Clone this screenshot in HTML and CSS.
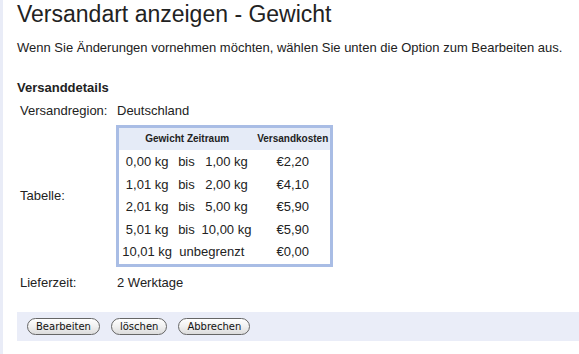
FILE: index.html
```html
<!DOCTYPE html>
<html lang="de">
<head>
    <meta charset="UTF-8">
    <title>Versandart anzeigen - Gewicht</title>
    <link rel="stylesheet" href="styles.css">
</head>
<body>
    <div class="page">
        <h1>Versandart anzeigen - Gewicht</h1>
        <p class="intro">Wenn Sie Änderungen vornehmen möchten, wählen Sie unten die Option zum Bearbeiten aus.</p>
        <h3>Versanddetails</h3>
        <div class="details">
            <div class="label">Versandregion:</div>
            <div class="value">Deutschland</div>

            <div class="label middle">Tabelle:</div>
            <div class="value">
                <table class="rates">
                    <colgroup>
                        <col class="c-from">
                        <col class="c-bis">
                        <col class="c-to">
                        <col class="c-cost">
                    </colgroup>
                    <thead>
                        <tr>
                            <th colspan="3">Gewicht Zeitraum</th>
                            <th>Versandkosten</th>
                        </tr>
                    </thead>
                    <tbody>
                        <tr><td>0,00 kg</td><td>bis</td><td>1,00 kg</td><td>€2,20</td></tr>
                        <tr><td>1,01 kg</td><td>bis</td><td>2,00 kg</td><td>€4,10</td></tr>
                        <tr><td>2,01 kg</td><td>bis</td><td>5,00 kg</td><td>€5,90</td></tr>
                        <tr><td>5,01 kg</td><td>bis</td><td>10,00 kg</td><td>€5,90</td></tr>
                        <tr><td>10,01 kg</td><td colspan="2" class="open">unbegrenzt</td><td>€0,00</td></tr>
                    </tbody>
                </table>
            </div>

            <div class="label last">Lieferzeit:</div>
            <div class="value last">2 Werktage</div>
        </div>
        <div class="actions">
            <button type="button">Bearbeiten</button>
            <button type="button">löschen</button>
            <button type="button">Abbrechen</button>
        </div>
    </div>
</body>
</html>
```

FILE: styles.css
```css
body {
    margin: 0;
    font-family: "Liberation Sans", Arial, sans-serif;
    color: #222;
    background: #fff;
}
.page {
    min-height: 354px;
    border-left: 3px solid #e9ecf7;
    padding-left: 14px;
    box-sizing: border-box;
}
h1 {
    margin: 0;
    font-size: 23px;
    font-weight: normal;
    line-height: 28px;
}
.intro {
    margin: 12px 0 0;
    font-size: 13px;
    line-height: 16px;
}
h3 {
    margin: 24px 0 0;
    font-size: 13px;
    line-height: 16px;
}
.details {
    display: grid;
    grid-template-columns: 96px auto;
    row-gap: 6px;
    margin-top: 7px;
    padding-left: 3px;
    font-size: 13px;
    line-height: 16px;
}
.label.middle {
    align-self: center;
}
.value {
    padding-left: 1px;
}
.details .last {
    margin-top: 2px;
}
.rates {
    border: 3px solid #a9bde5;
    border-collapse: collapse;
    table-layout: fixed;
    width: 217px;
    margin-left: -1px;
}
.c-from { width: 57px; }
.c-bis { width: 22px; }
.c-to { width: 57px; }
.c-cost { width: 75px; }
.rates th {
    background: #e5ebf7;
    font-size: 10px;
    line-height: 12px;
    padding: 5px 0;
    border-bottom: 1px solid #fff;
    text-align: center;
    white-space: nowrap;
}
.rates td {
    padding: 3px 0;
    line-height: 16.6px;
    text-align: center;
    white-space: nowrap;
}
.rates td.open {
    text-align: left;
    padding-left: 4px;
}
.actions {
    margin-top: 21px;
    background: #eaedf8;
    padding: 6px 10px;
    display: flex;
    gap: 11px;
    height: 29px;
    box-sizing: border-box;
}
.actions button {
    height: 17px;
    padding: 0 8px;
    border: 1px solid #666;
    border-radius: 9px;
    background: linear-gradient(#fff, #f0f0f0 50%, #dcdcdc);
    font-family: "DejaVu Sans", sans-serif;
    font-size: 10px;
    line-height: 15px;
    color: #111;
}
```
